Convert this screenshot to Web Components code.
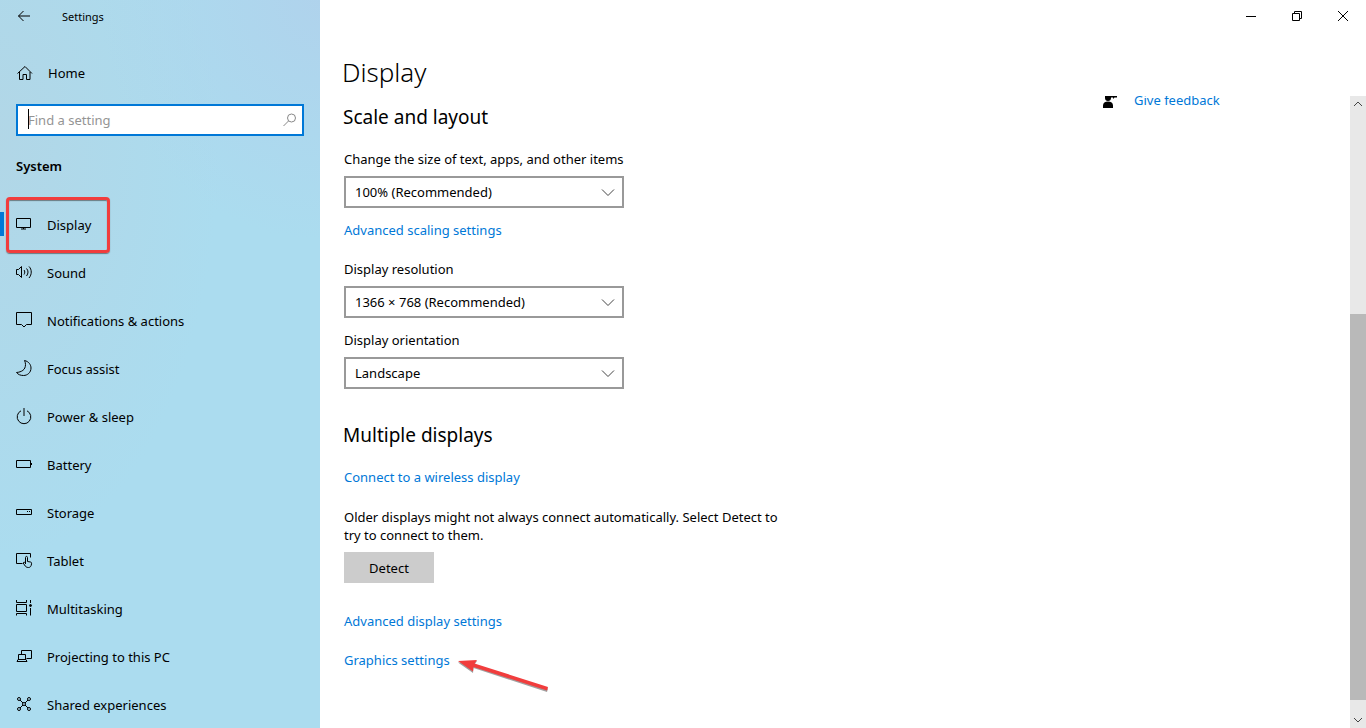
<!DOCTYPE html>
<html lang="en">
<head>
<meta charset="utf-8">
<title>Settings</title>
<style>
  body {
    margin: 0;
    font-family: "Noto Sans", "Open Sans", sans-serif;
    font-size: 13px;
    line-height: 18px;
    color: #000;
    background: #fff;
  }
</style>
</head>
<body>

<settings-window>
  <settings-sidebar slot="sidebar" title="Settings" section="System">
    <nav-item icon="display" selected marked>Display</nav-item>
    <nav-item icon="sound">Sound</nav-item>
    <nav-item icon="notifications">Notifications &amp; actions</nav-item>
    <nav-item icon="focus">Focus assist</nav-item>
    <nav-item icon="power">Power &amp; sleep</nav-item>
    <nav-item icon="battery">Battery</nav-item>
    <nav-item icon="storage">Storage</nav-item>
    <nav-item icon="tablet">Tablet</nav-item>
    <nav-item icon="multitasking">Multitasking</nav-item>
    <nav-item icon="projecting">Projecting to this PC</nav-item>
    <nav-item icon="shared">Shared experiences</nav-item>
  </settings-sidebar>

  <window-controls slot="controls"></window-controls>
  <span slot="heading">Display</span>

  <settings-section heading="Scale and layout">
    <settings-select label="Change the size of text, apps, and other items" options="100% (Recommended)|125%"></settings-select>
    <settings-link class="after-field">Advanced scaling settings</settings-link>
    <settings-select class="block" label="Display resolution" options="1366 × 768 (Recommended)|1280 × 720|1024 × 768"></settings-select>
    <settings-select class="after-field" label="Display orientation" options="Landscape|Portrait|Landscape (flipped)|Portrait (flipped)"></settings-select>
  </settings-section>

  <settings-section heading="Multiple displays">
    <settings-link>Connect to a wireless display</settings-link>
    <p>Older displays might not always connect automatically. Select Detect to try to connect to them.</p>
    <settings-button>Detect</settings-button>
    <settings-link class="after-button">Advanced display settings</settings-link>
    <settings-link class="block" marked>Graphics settings</settings-link>
  </settings-section>

  <feedback-link slot="related">Give feedback</feedback-link>
  <scroll-bar slot="scroll"></scroll-bar>
</settings-window>

<script>
const ICONS = {
  back: '<path d="M14 7H2.500M7.500 2l-5 5 5 5"/>',
  home: '<path d="M1.500 8.500L9 1.500l7 7M3.500 7v7.500h3.500v-5h3.500v5h3.500V7"/>',
  search: '<circle cx="9.500" cy="6" r="4"/><path d="M6.500 9l-5 5"/>',
  display: '<path d="M.5 2.500h14v9H.5zM7.500 11.500v1.500M5 13h5"/>',
  sound: '<path d="M.5 5.500H2.500L5.500 2.500v11L2.500 10.500H.5zM8 6c1 1 1 3 0 4.500M10.500 4.500c2 2 2 5 0 7.500M13 2.500c3 3 3 8 0 11.500"/>',
  notifications: '<path d="M.5 .5h15v12h-5L8 15l-2.500-2.500h-5z"/>',
  focus: '<path d="M8.500 .5c4.500 1 6.500 4.500 6.500 7.500 0 4.500-3.500 7.500-7.500 7.500-3 0-5.500-1-7-3 5-.5 9-2.500 9-8 0-1.500-.4-2.800-1-4z"/>',
  power: '<path d="M5 2.800A6.800 6.800 0 1 0 11 2.800M8 0v8"/>',
  battery: '<path d="M.5 4.500h14v7H.5zM15.500 7v2"/>',
  storage: '<path d="M.5 5.500h15v5H.5zM11 7.500h1M13 7.500h1"/>',
  tablet: '<path d="M6.500 11.500h-6v-10h14v4"/><path d="M9.500 12V5.500c0-1.500 2-1.500 2 0v4l3 .5c1 .2 1.200.8 1 2-.3 2.200-1.200 3.500-3 3.500-2 0-3-.8-4-2.500L7.200 11c.3-1.200 1.600-.8 2.300 0"/>',
  multitasking: '<path d="M.5 0v2.500h10V0M.5 4.500h10v7H.5zM.5 15.500v-2h10v2M14.500 0v3M14.500 8v7.500"/><circle cx="14.500" cy="5.500" r="1" fill="currentColor"/>',
  projecting: '<path d="M5.500 6V2.500h10v8h-5M2.500 11.500v-5h7v5M1 13.500l1-2h8l1 2z"/>',
  shared: '<circle cx="3" cy="3" r="1.500"/><circle cx="13" cy="3" r="1.500"/><circle cx="3" cy="13" r="1.500"/><circle cx="13" cy="13" r="1.500"/><circle cx="8" cy="8" r="1.500"/><path d="M4 4l3 3M12 4l-3 3M4 12l3-3M12 12l-3-3"/>',
  minimize: '<path d="M3 8.500h10"/>',
  restore: '<path d="M3.500 5.500h7v7h-7zM5.500 5.500v-2h7v7h-2"/>',
  close: '<path d="M3 3l10 10M13 3L3 13"/>',
  chevron: '<path d="M2 5.500l6 6 6-6"/>',
  up: '<path d="M4 10l4-4 4 4"/>',
  down: '<path d="M4 6l4 4 4-4"/>',
  feedback: '<path d="M3 2h6v3a3 3 0 0 1-6 0zM1 15v-2.500C1 10 3 8.500 6 8.500s5 1.500 5 4V15zM9 2h6v2.500h-2.500L11 6V4.500H9z" fill="currentColor" stroke="none"/>'
};

function icon(name) {
  return `<svg width="16" height="16" viewBox="0 0 16 16" fill="none" stroke="currentColor" overflow="visible" aria-hidden="true">${ICONS[name] || ''}</svg>`;
}

class BaseElement extends HTMLElement {
  constructor() {
    super();
    this.attachShadow({ mode: 'open' });
  }

  connectedCallback() {
    this.shadowRoot.innerHTML = this.template();
  }
}

class SettingsWindow extends BaseElement {
  template() {
    return `
      <style>
        :host {
          display: flex;
          height: 100vh;
          overflow: hidden;
        }

        .page {
          flex: 1;
          min-width: 0;
          display: flex;
          flex-direction: column;
        }

        h1 {
          margin: 0;
          padding: 20px 0 4px 22px;
          font-size: 26px;
          line-height: 40px;
          font-weight: 300;
        }

        .body {
          flex: 1;
          min-height: 0;
          display: flex;
          overflow: hidden;
        }

        .content {
          flex: 1;
          min-width: 0;
          padding: 8px 24px 0;
        }

        .related {
          flex: none;
          width: 248px;
        }
      </style>
      <slot name="sidebar"></slot>
      <main class="page">
        <slot name="controls"></slot>
        <h1><slot name="heading"></slot></h1>
        <div class="body">
          <div class="content"><slot></slot></div>
          <div class="related"><slot name="related"></slot></div>
          <slot name="scroll"></slot>
        </div>
      </main>
    `;
  }
}

class SettingsSidebar extends BaseElement {
  template() {
    return `
      <style>
        :host {
          display: block;
          flex: none;
          width: 320px;
          overflow: hidden;
          background:
            radial-gradient(ellipse 220px 240px at 100% 0, rgba(176, 210, 236, .9), rgba(176, 210, 236, 0)),
            radial-gradient(ellipse 220px 420px at 0 140px, rgba(178, 214, 230, .9), rgba(178, 214, 230, 0)),
            #abdcef;
        }

        .bar {
          display: flex;
          align-items: center;
          height: 34px;
          padding-left: 16px;
          gap: 30px;
          font-size: 11px;
        }

        button {
          display: flex;
          padding: 0;
          border: 0;
          background: none;
          color: inherit;
        }

        .home {
          display: flex;
          align-items: center;
          gap: 16px;
          height: 48px;
          margin-top: 15px;
          padding-left: 16px;
          color: inherit;
          text-decoration: none;
        }

        .search {
          position: relative;
          display: flex;
          align-items: center;
          box-sizing: border-box;
          height: 32px;
          margin: 7px 16px 0;
          padding: 0 4px 0 10px;
          border: 2px solid #0078d7;
          background: #fff;
          color: #888;
        }

        .search input {
          flex: 1;
          min-width: 0;
          padding: 0;
          border: 0;
          outline: 0;
          font: inherit;
          background: none;
        }

        .search input::placeholder {
          color: #949494;
          opacity: 1;
        }

        /* text cursor of the focused box */
        .caret {
          position: absolute;
          left: 10px;
          top: 3px;
          width: 1px;
          height: 20px;
          background: #000;
        }

        h2 {
          margin: 21px 16px 26px;
          font-size: 13px;
          line-height: 18px;
          font-weight: 600;
        }
      </style>
      <div class="bar">
        <button type="button" aria-label="Back">${icon('back')}</button>
        <span>${this.getAttribute('title')}</span>
      </div>
      <a class="home" href="#">${icon('home')}<span>Home</span></a>
      <label class="search">
        <input type="text" placeholder="Find a setting" aria-label="Find a setting">
        <i class="caret"></i>
        ${icon('search')}
      </label>
      <h2>${this.getAttribute('section')}</h2>
      <nav><slot></slot></nav>
    `;
  }
}

class NavItem extends BaseElement {
  template() {
    return `
      <style>
        :host {
          display: block;
          position: relative;
        }

        a {
          display: flex;
          align-items: center;
          gap: 15px;
          height: 48px;
          padding-left: 16px;
          color: inherit;
          text-decoration: none;
        }

        svg {
          margin-bottom: 2px;
        }

        :host([selected])::before {
          content: "";
          position: absolute;
          left: 0;
          top: 11px;
          width: 4px;
          height: 24px;
          background: #0078d7;
        }

        :host([marked])::after {
          content: "";
          position: absolute;
          left: 6px;
          top: -4px;
          width: 98px;
          height: 50px;
          border: 3px solid #f13d3d;
          border-radius: 4px;
          box-shadow: 0 1px 1px rgba(60, 60, 60, .6), inset 0 1px 1px rgba(60, 60, 60, .6);
          pointer-events: none;
        }
      </style>
      <a href="#">${icon(this.getAttribute('icon'))}<span><slot></slot></span></a>
    `;
  }
}

class WindowControls extends BaseElement {
  template() {
    return `
      <style>
        :host {
          display: flex;
          justify-content: flex-end;
          height: 32px;
        }

        button {
          display: flex;
          align-items: center;
          justify-content: center;
          width: 46px;
          padding: 0;
          border: 0;
          background: none;
          color: #000;
        }
      </style>
      <button type="button" aria-label="Minimize">${icon('minimize')}</button>
      <button type="button" aria-label="Restore">${icon('restore')}</button>
      <button type="button" aria-label="Close">${icon('close')}</button>
    `;
  }
}

class SettingsSection extends BaseElement {
  template() {
    return `
      <style>
        :host {
          display: block;
          margin-bottom: 33px;
        }

        h2 {
          margin: 0 0 20px -1px;
          font-size: 19px;
          line-height: 26px;
          font-weight: 400;
        }

        ::slotted(p) {
          max-width: 448px;
          margin: 22px 0 8px;
        }

        ::slotted(.after-field) {
          margin-top: 13px;
        }

        ::slotted(.block) {
          margin-top: 21px;
        }

        ::slotted(.after-button) {
          margin-top: 29px;
        }
      </style>
      <h2>${this.getAttribute('heading')}</h2>
      <slot></slot>
    `;
  }
}

class SettingsSelect extends BaseElement {
  template() {
    const options = this.getAttribute('options').split('|');

    return `
      <style>
        :host {
          display: block;
        }

        label {
          display: block;
          margin-bottom: 8px;
        }

        .field {
          position: relative;
          max-width: 280px;
        }

        select {
          display: block;
          appearance: none;
          box-sizing: border-box;
          width: 100%;
          height: 32px;
          padding: 0 32px 0 9px;
          border: 2px solid #999;
          border-radius: 0;
          background: #fff;
          color: inherit;
          font: inherit;
        }

        svg {
          position: absolute;
          right: 8px;
          top: 8px;
          color: #444;
          pointer-events: none;
        }
      </style>
      <label for="field">${this.getAttribute('label')}</label>
      <div class="field">
        <select id="field">${options.map(o => `<option>${o}</option>`).join('')}</select>
        ${icon('chevron')}
      </div>
    `;
  }
}

class SettingsLink extends BaseElement {
  template() {
    const arrow = `
      <svg class="arrow" width="96" height="40" viewBox="0 0 96 40" aria-hidden="true">
        <path d="M2 5.500l19-1.500-2.500 3.500L92 31.500l-1 3.500L17.500 11l-.5 5z" fill="#777" opacity=".7" transform="translate(0 1)"/>
        <path d="M2 5l19-1-2.500 3.500L92 31l-1 3.500L17.500 11l-.5 4.500z" fill="#f13d3d"/>
      </svg>
    `;

    return `
      <style>
        :host {
          display: flex;
        }

        .wrap {
          position: relative;
        }

        a {
          color: #0078d7;
          text-decoration: none;
        }

        .arrow {
          position: absolute;
          left: 100%;
          top: 5px;
          margin-left: 6px;
        }
      </style>
      <span class="wrap"><a href="#"><slot></slot></a>${this.hasAttribute('marked') ? arrow : ''}</span>
    `;
  }
}

class SettingsButton extends BaseElement {
  template() {
    return `
      <style>
        :host {
          display: block;
        }

        button {
          display: block;
          min-width: 90px;
          height: 31px;
          padding: 0 16px;
          border: 0;
          background: #ccc;
          color: inherit;
          font: inherit;
        }
      </style>
      <button type="button"><slot></slot></button>
    `;
  }
}

class FeedbackLink extends BaseElement {
  template() {
    return `
      <style>
        :host {
          display: block;
          margin-top: -5px;
        }

        a {
          display: flex;
          align-items: flex-end;
          gap: 16px;
          color: #0078d7;
          text-decoration: none;
        }

        svg {
          color: #000;
        }
      </style>
      <a href="#">${icon('feedback')}<span><slot></slot></span></a>
    `;
  }
}

class ScrollBar extends BaseElement {
  template() {
    return `
      <style>
        :host {
          display: flex;
          flex-direction: column;
          flex: none;
          width: 16px;
          background: #e8e8e8;
        }

        button {
          display: flex;
          height: 16px;
          padding: 0;
          border: 0;
          background: none;
          color: #444;
        }

        .track {
          flex: 1;
          display: grid;
          grid-template-rows: 202fr 386fr 12fr;
        }

        .thumb {
          grid-row: 2;
          background: #b9b9b9;
        }
      </style>
      <button type="button" aria-label="Scroll up">${icon('up')}</button>
      <div class="track"><div class="thumb"></div></div>
      <button type="button" aria-label="Scroll down">${icon('down')}</button>
    `;
  }
}

customElements.define('settings-window', SettingsWindow);
customElements.define('settings-sidebar', SettingsSidebar);
customElements.define('nav-item', NavItem);
customElements.define('window-controls', WindowControls);
customElements.define('settings-section', SettingsSection);
customElements.define('settings-select', SettingsSelect);
customElements.define('settings-link', SettingsLink);
customElements.define('settings-button', SettingsButton);
customElements.define('feedback-link', FeedbackLink);
customElements.define('scroll-bar', ScrollBar);
</script>
</body>
</html>
